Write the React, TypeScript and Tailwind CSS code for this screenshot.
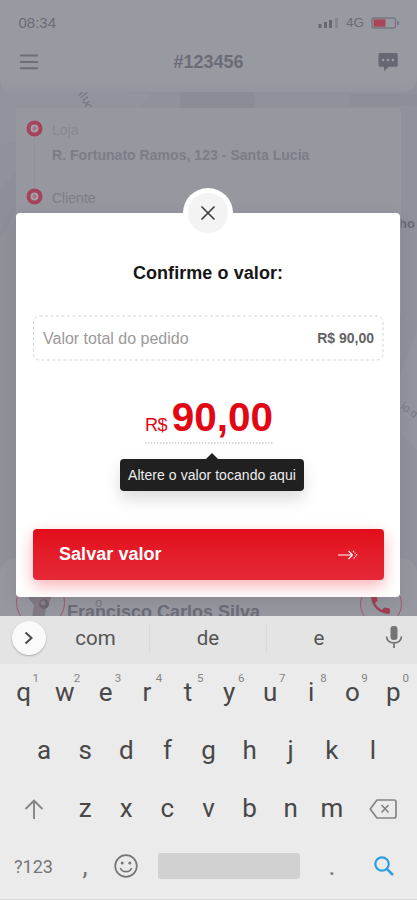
import type { ReactNode } from "react";

const topRow = ["q", "w", "e", "r", "t", "y", "u", "i", "o", "p"];
const homeRow = ["a", "s", "d", "f", "g", "h", "j", "k", "l"];
const bottomRow = ["z", "x", "c", "v", "b", "n", "m"];

function StatusBar() {
  return (
    <div className="flex h-[46px] items-center justify-between pr-[17px] pl-[18.500px] text-[#6b6c77]">
      <span className="text-[15px]">08:34</span>
      <div className="flex items-center">
        <svg width="20" height="10" viewBox="0 0 20 10" fill="#666772">
          <rect x="0.5" y="6" width="3" height="4" />
          <rect x="6" y="4" width="3" height="6" />
          <rect x="11" y="2" width="3" height="8" />
          <rect x="17" y="0" width="3" height="10" fill="#85868f" />
        </svg>
        <span className="ml-[8px] text-[13.500px]">4G</span>
        <svg className="ml-[7px]" width="29" height="12" viewBox="0 0 29 12">
          <rect x="1" y="1" width="23.500" height="10" rx="1.500" fill="none" stroke="#777780" strokeWidth="1.400" />
          <rect x="2.500" y="2.300" width="12" height="7.400" fill="#a84558" />
          <rect x="26" y="4" width="2" height="4" rx="0.800" fill="#777780" />
        </svg>
      </div>
    </div>
  );
}

function Header() {
  return (
    <div className="flex h-[32px] items-center justify-between px-[19px] text-[#6b6c77]">
      <svg width="20" height="16" viewBox="0 0 20 16" stroke="#6d6e78" strokeWidth="2">
        <path d="M1 1.500h18M1 8h18M1 14.200h18" />
      </svg>
      <h1 className="text-[18px] font-bold">#123456</h1>
      <svg width="20" height="20" viewBox="0 0 20 20">
        <path d="M2 1h16.200a1.500 1.500 0 0 1 1.500 1.500v10.700a1.500 1.500 0 0 1-1.500 1.500h-7.400L6 19.300v-4.600H2A1.500 1.500 0 0 1 .5 13.200V2.500A1.500 1.500 0 0 1 2 1Z" fill="#666772" />
        <g fill="#9a9ba4">
          <circle cx="5" cy="8" r="1.300" />
          <circle cx="10" cy="8" r="1.300" />
          <circle cx="15" cy="8" r="1.300" />
        </g>
      </svg>
    </div>
  );
}

function Pin() {
  return (
    <svg width="17" height="17" viewBox="0 0 17 17">
      <circle cx="8.500" cy="8.500" r="6" fill="#a3a1aa" stroke="#a4435a" strokeWidth="4" />
      <path d="m8.500 5.800 2.500 2.500-2.800 3-2.200-2.500Z" fill="#a87484" />
    </svg>
  );
}

// Streets and labels that stay visible around the cards
function MapArt() {
  return (
    <svg className="absolute inset-0" width="417" height="616" viewBox="0 0 417 616">
      <rect width="417" height="616" fill="#90919a" />
      <path d="M0 85 60 86 150 94 130 120 0 145Z" fill="#92939c" />
      <path d="M180 92h75v18h-75z" fill="#8b8c95" />
      <path d="M350 94h67v12h-67z" fill="#8d8e97" />
      <path d="m398 380 19-50v120l-19-20Z" fill="#93949d" />
      <path d="m0 190 17-20v40L0 240Z" fill="#8d8e97" />
      <g fontFamily="Liberation Sans, Arial, sans-serif" fill="#777882">
        <text x="399" y="228" fontSize="13" fontWeight="bold" fill="#686973">ho</text>
        <text x="400" y="408" fontSize="11" transform="rotate(36 400 408)">io d</text>
      </g>
    </svg>
  );
}

function DeliveryScreen() {
  return (
    <div className="relative h-[616px] shrink-0 overflow-hidden">
      <MapArt />
      <div className="relative flex h-full flex-col">
        <div className="h-[92px] shrink-0 rounded-b-[14px] bg-linear-to-b from-[#989aa2] from-85% to-[#94959e]">
          <StatusBar />
          <Header />
        </div>
        <section className="mx-4 mt-4 h-[210px] shrink-0 rounded bg-[#96979f] pl-[10px]">
          <div className="flex pt-[12px]">
            <div className="flex w-[26px] flex-col">
              <Pin />
              <div className="ml-[8px] h-[51px] w-px bg-[#90919a]" />
              <Pin />
            </div>
            <div className="flex flex-col text-[14px] leading-[20px] text-[#7c7d87]">
              <span className="text-[#888993]">Loja</span>
              <span className="mt-[5px] font-bold tracking-[0.04px]">R. Fortunato Ramos, 123 - Santa Lucia</span>
              <span className="mt-[23px]">Cliente</span>
            </div>
          </div>
        </section>
        <section className="mt-auto h-[58px] shrink-0 rounded-t-[16px] bg-[#96979f] pl-4">
          <div className="flex pt-[20px]">
            <div className="size-[49px] shrink-0 overflow-hidden rounded-full border border-[#a3576c]">
              <svg width="47" height="47" viewBox="0 0 47 47">
                <path d="M12 0h22v20l-5 8-3 19H14l3-21-5-6Z" fill="#7e7983" />
                <path d="M15 9h11l3 12-4 13h-9l2-12Z" fill="#857a82" />
                <circle cx="27" cy="25" r="5" fill="#6d6671" />
                <circle cx="26" cy="24" r="2.500" fill="#8b8189" />
              </svg>
            </div>
            <span className="mt-[24px] ml-[2px] text-[18px] leading-[20px] font-bold whitespace-nowrap text-[#6b6c77]">Francisco Carlos Silva</span>
            <div className="mt-[5px] mr-[15.500px] ml-auto flex size-[42px] items-center justify-center rounded-full border border-[#a3576c]">
              <svg width="25" height="25" viewBox="0 0 24 24" fill="#a13e52">
                <path d="M6.620 10.790a15.150 15.150 0 0 0 6.590 6.590l2.200-2.200a1 1 0 0 1 1.020-.240c1.120.370 2.330.570 3.570.570a1 1 0 0 1 1 1V20a1 1 0 0 1-1 1C10.610 21 3 13.390 3 4a1 1 0 0 1 1-1h3.500a1 1 0 0 1 1 1c0 1.250.200 2.450.570 3.570a1 1 0 0 1-.250 1.020Z" />
              </svg>
            </div>
          </div>
        </section>
      </div>
      {/* Street name fragment between the header and the address card */}
      <svg className="absolute top-[90px] left-[76px]" width="18" height="20" viewBox="0 0 18 20" fill="none" stroke="#777882" strokeWidth="1.300">
        <path d="m2.500 5.500 4-3.500M4.500 7.500l7-5M7 10.500l5-4M7.500 10.500c-1 3 2 3.500 6 1M10 17c-.500-3 2.500-4.500 5.500-.500" />
      </svg>
      <span className="absolute top-[596px] left-[95px] text-[13px] leading-[14px] text-[#777882]">o</span>
    </div>
  );
}

function ConfirmModal() {
  return (
    <div className="absolute top-[213px] left-4 h-[384px] w-[384px] rounded-[4px] bg-white px-[17px] shadow-[0_4px_16px_rgba(60,60,75,0.12)]">
      <button className="absolute top-[-25px] left-[166.500px] flex size-[50px] items-center justify-center rounded-full bg-white" aria-label="Fechar">
        <span className="flex size-[40px] items-center justify-center rounded-full bg-[#f3f3f3]">
          <svg width="16" height="16" viewBox="0 0 16 16" stroke="#3c3c3c" strokeWidth="1.600">
            <path d="m1.500 1.500 13 13M14.500 1.500l-13 13" />
          </svg>
        </span>
      </button>
      <h2 className="pt-[49px] text-center text-[18px] leading-[22px] font-bold tracking-[0.070px] text-[#161616]">Confirme o valor:</h2>
      <div className="relative mt-[31px] flex h-[46px] items-center justify-between px-[10px]">
        <svg className="absolute inset-0" width="351" height="46">
          <rect x="0.500" y="1" width="349.500" height="44" rx="6" fill="none" stroke="#d5d5d5" strokeDasharray="3 2.500" />
        </svg>
        <span className="mt-[2px] text-[16px] text-[#9a9a9a]">Valor total do pedido</span>
        <span className="mr-[-1px] text-[14px] font-bold text-[#636363]">R$ 90,00</span>
      </div>
      <div className="mt-[33px] ml-[2px] flex flex-col items-center">
        <div className="flex h-[48px] w-[128px] items-baseline justify-between text-[#e20714]">
          <span className="text-[18px] tracking-[-0.400px]">R$</span>
          <span className="text-[40.500px] leading-[46px] font-bold">90,00</span>
        </div>
        <svg width="128" height="2">
          <path d="M0 1h128" stroke="#b5b5b5" strokeDasharray="1.500 1.500" />
        </svg>
        <div className="mt-[9px] ml-[6px] flex flex-col items-center">
          <svg width="12" height="6" viewBox="0 0 14 7">
            <path d="M7 0 14 7H0Z" fill="#202020" />
          </svg>
          <div className="flex h-[32px] w-[184px] items-center justify-center rounded-[4px] bg-[#202020] text-[14px] tracking-[0.050px] whitespace-nowrap text-[#ededed] shadow-[0_8px_16px_rgba(0,0,0,0.14)]">
            Altere o valor tocando aqui
          </div>
        </div>
      </div>
      <button className="mt-[38px] flex h-[51px] w-[351px] items-center justify-between rounded-[4px] bg-linear-to-b from-[#e30b19] to-[#e52837] pr-[26px] pl-[26px] text-white shadow-[0_6px_16px_rgba(226,20,35,0.32)]">
        <span className="text-[18px] font-bold tracking-[0.050px]">Salvar valor</span>
        <svg width="20" height="10" viewBox="0 0 20 10" fill="none" stroke="white" strokeWidth="1.100">
          <path d="M0 5h14.500M10.500 1l4 4-4 4" />
          <path d="m15 1 4 4-4 4" strokeDasharray="1.500 0.700" opacity="0.800" />
        </svg>
      </button>
    </div>
  );
}

function Key({ children, hint }: { children: ReactNode; hint?: number }) {
  return (
    <button className="relative flex h-[58px] w-[41.100px] shrink-0 items-center justify-center">
      <span className="mt-[-2px]">{children}</span>
      {hint !== undefined && <span className="absolute top-[7px] left-[29.500px] text-[11.500px] leading-[14px] text-[#858585]">{hint}</span>}
    </button>
  );
}

function Keyboard() {
  return (
    <div className="flex h-[284px] flex-col bg-[#ebebeb] font-['Roboto',sans-serif] text-[26px] text-[#484848]">
      <div className="flex h-[48px] shrink-0 items-center bg-[#e4e4e4] text-[20.500px] text-[#555555]">
        <button className="mt-[-5px] ml-[12px] flex size-[34px] items-center justify-center rounded-full bg-[#fafafa] shadow-[0_1px_2px_rgba(0,0,0,0.25)]" aria-label="Mais">
          <svg width="10" height="14" viewBox="0 0 10 14" fill="none" stroke="#484848" strokeWidth="2">
            <path d="m1.500 1.500 6 5.500-6 5.500" />
          </svg>
        </button>
        <span className="mt-[-4px] ml-[-4px] w-[107px] text-center">com</span>
        <div className="mt-[-4px] h-[28px] w-px bg-[#d9d9d9]" />
        <span className="mt-[-4px] w-[116px] text-center">de</span>
        <div className="mt-[-4px] h-[28px] w-px bg-[#d9d9d9]" />
        <span className="mt-[-4px] w-[104px] text-center">e</span>
        <svg className="mt-[-6px] ml-[14px]" width="18" height="24" viewBox="0 0 18 24">
          <rect x="5.500" y="1" width="7" height="14" rx="3" fill="#757575" />
          <path d="M1.500 11.500c.500 4 3.500 6.300 7.500 6.300s7-2.300 7.500-6.300M9 18v5" fill="none" stroke="#757575" strokeWidth="1.800" />
        </svg>
      </div>
      <div className="flex h-[58px] justify-center">
        {topRow.map((k, i) => (
          <Key key={k} hint={(i + 1) % 10}>{k}</Key>
        ))}
      </div>
      <div className="flex h-[58px] justify-center">
        {homeRow.map((k) => (
          <Key key={k}>{k}</Key>
        ))}
      </div>
      <div className="flex h-[58px] items-center justify-center">
        <div className="flex w-[61.500px] items-center justify-center">
          <svg width="20" height="20" viewBox="0 0 20 20" fill="none" stroke="#858585" strokeWidth="1.900">
            <path d="M10 20V2M1.500 10 10 1.700l8.500 8.300" />
          </svg>
        </div>
        {bottomRow.map((k) => (
          <Key key={k}>{k}</Key>
        ))}
        <div className="flex w-[61.500px] items-center justify-center">
          <svg width="28" height="20" viewBox="0 0 28 20" fill="none" stroke="#858585" strokeWidth="1.700">
            <path d="M8 1h17a2 2 0 0 1 2 2v14a2 2 0 0 1-2 2H8L1.200 10Z" strokeLinejoin="round" />
            <path d="m12.500 6 7 7.500M19.500 6l-7 7.500" />
          </svg>
        </div>
      </div>
      <div className="flex h-[57px] items-center">
        <span className="w-[67px] text-center text-[18px] text-[#757575]">?123</span>
        <span className="w-[36px] text-center text-[#757575]">,</span>
        <svg className="mt-[-2px] ml-[11px]" width="24" height="24" viewBox="0 0 24 24" fill="none" stroke="#757575" strokeWidth="1.700">
          <circle cx="12" cy="12" r="10.800" />
          <path d="M6.300 14c1 2.300 3 3.700 5.700 3.700s4.700-1.400 5.700-3.700" />
          <circle cx="8.200" cy="9" r="1.500" fill="#757575" stroke="none" />
          <circle cx="15.800" cy="9" r="1.500" fill="#757575" stroke="none" />
        </svg>
        <div className="mt-[-1px] ml-[20px] h-[26px] w-[142px] rounded-[3px] bg-[#d1d1d1]" />
        <span className="ml-[12px] w-[40px] text-center text-[#757575]">.</span>
        <svg className="mt-[-2px] ml-[22px]" width="20" height="20" viewBox="0 0 20 20" fill="none" stroke="#2f9fe0" strokeWidth="2.200">
          <circle cx="8" cy="8" r="6.700" />
          <path d="m12.800 12.800 6.200 6.200" strokeWidth="2.600" />
        </svg>
      </div>
      <div className="mt-auto h-px bg-[#d8d8d8]" />
    </div>
  );
}

export default function App() {
  return (
    <div className="relative flex h-[900px] w-[417px] flex-col overflow-hidden font-['Liberation_Sans',Arial,sans-serif]">
      <DeliveryScreen />
      <Keyboard />
      <ConfirmModal />
    </div>
  );
}
